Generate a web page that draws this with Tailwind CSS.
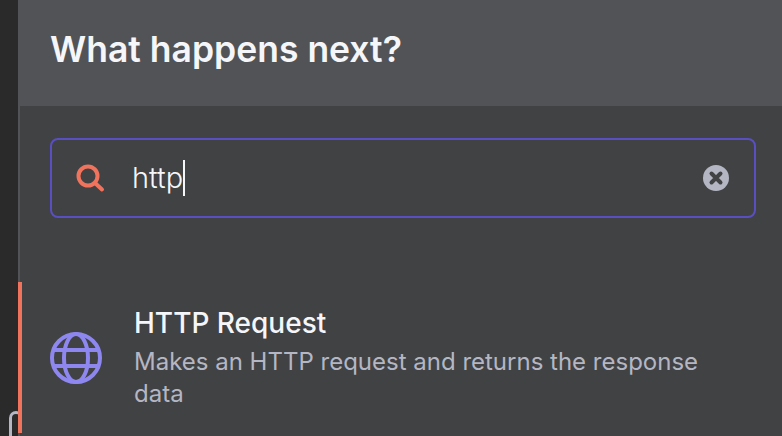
<!DOCTYPE html>
<html lang="en">
<head>
    <meta charset="UTF-8">
    <title>What happens next?</title>
    <script src="https://cdn.jsdelivr.net/npm/@tailwindcss/browser@4"></script>
</head>
<body class="bg-[#2a2a2a] font-['Inter',sans-serif] overflow-hidden">
    <div class="relative w-[782px] h-[436px] overflow-hidden flex">
        <!-- canvas behind the panel -->
        <div class="w-[18px] shrink-0 relative">
            <div class="absolute left-[9px] top-[411px] w-[14px] h-[40px] border-[3px] border-[#b4b7c3] rounded-[8px]"></div>
        </div>
        <div class="relative flex-1 flex flex-col border-l-2 border-[#525356] bg-[#414244]">
            <div class="h-[106px] -ml-[2px] pl-[32px] pt-[30px] bg-[#525356]">
                <h1 class="text-[35.5px] leading-[40px] font-semibold text-[#f5f6fa]">What happens next?</h1>
            </div>
            <div class="pl-[30px] pr-[26px] pt-[32px]">
                <div class="w-[706px] h-[80px] flex items-center border-2 border-[#5a4fc0] rounded-[8px] pl-[23px] pr-[25px]">
                    <svg class="w-[30px] h-[30px] shrink-0" viewBox="0 0 30 30" fill="none" stroke="#f0735d" stroke-width="4">
                        <circle cx="13" cy="13" r="9.5"/>
                        <path d="M20 20l7 6.5" stroke-linecap="round"/>
                    </svg>
                    <span class="ml-[27px] text-[#f5f6fa] text-[29px] leading-[36px] font-light border-r-2 border-[#f5f6fa]">http</span>
                    <svg class="ml-auto w-[26px] h-[26px] shrink-0" viewBox="0 0 26 26">
                        <circle cx="13" cy="13" r="13" fill="#b4b7c3"/>
                        <path d="M8.5 8.5l9 9M17.5 8.5l-9 9" stroke="#414244" stroke-width="4" stroke-linecap="round"/>
                    </svg>
                </div>
            </div>
            <div class="relative mt-[64px] -ml-[2px] pl-[28px] h-[151px] flex border-l-4 border-[#f0735d]">
                <div class="w-[52px] shrink-0 pt-[50px] mr-[32px]">
                    <svg class="w-[52px] h-[52px]" viewBox="0 0 52 52" fill="none" stroke="#8f87f0" stroke-width="4">
                        <circle cx="26" cy="26" r="24"/>
                        <ellipse cx="26" cy="26" rx="12" ry="24"/>
                        <path d="M3.5 18h45M3.5 34h45"/>
                    </svg>
                </div>
                <div class="pt-[24px]">
                    <div class="text-[#f5f6fa] text-[28px] leading-[34px] font-[450]">HTTP Request</div>
                    <div class="mt-[6px] text-[#b4b7c3] text-[24px] leading-[32px] w-[600px]">Makes an HTTP request and returns the response data</div>
                </div>
            </div>
        </div>
    </div>
</body>
</html>
